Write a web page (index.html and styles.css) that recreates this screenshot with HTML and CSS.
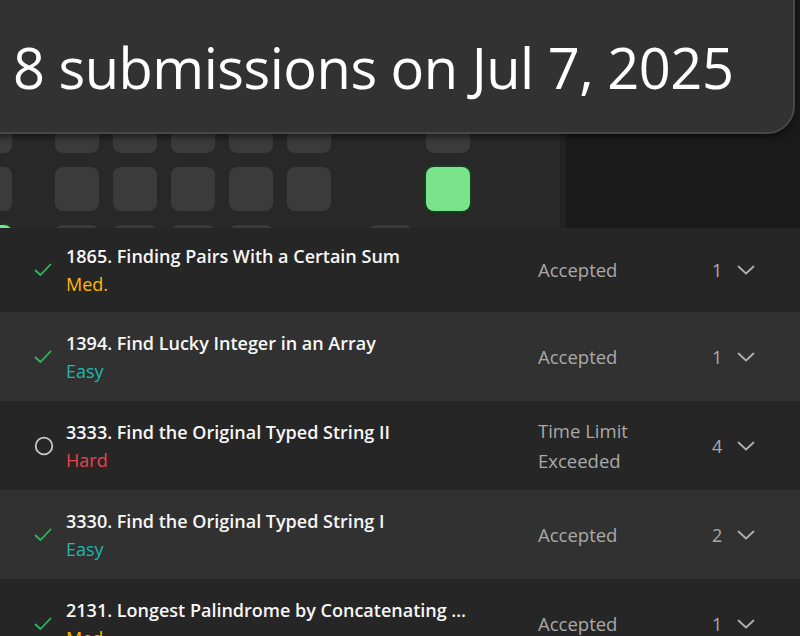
FILE: index.html
```html
<!DOCTYPE html>
<html lang="en">
<head>
<meta charset="utf-8">
<title>Submissions</title>
<link rel="stylesheet" href="styles.css">
</head>
<body>
<div class="page">
  <section class="top">
    <div class="calendar">
      <div class="month">
        <div class="week"><span class="cell"></span><span class="cell"></span><span class="cell green"></span></div>
      </div>
      <div class="month">
        <div class="week"><span class="cell"></span><span class="cell"></span><span class="cell"></span></div>
        <div class="week"><span class="cell"></span><span class="cell"></span><span class="cell"></span></div>
        <div class="week"><span class="cell"></span><span class="cell"></span><span class="cell"></span></div>
        <div class="week"><span class="cell"></span><span class="cell"></span><span class="cell"></span></div>
        <div class="week"><span class="cell"></span><span class="cell"></span><span class="cell empty"></span></div>
      </div>
      <div class="month current">
        <div class="week"><span class="cell empty"></span><span class="cell empty"></span><span class="cell"></span></div>
        <div class="week"><span class="cell"></span><span class="cell green"></span><span class="cell empty"></span></div>
      </div>
    </div>
    <div class="side"></div>
    <div class="tooltip">8 submissions on Jul 7, 2025</div>
  </section>

  <section class="list">
    <div class="row dark first">
      <span class="icon"><svg width="18" height="14" viewBox="0 0 18 14"><path d="M1.5 7.5 L6.5 12 L16.5 1.5" fill="none" stroke="#2cbb5d" stroke-width="1.8" stroke-linecap="round" stroke-linejoin="round"/></svg></span>
      <div class="info">
        <div class="title">1865. Finding Pairs With a Certain Sum</div>
        <div class="diff med">Med.</div>
      </div>
      <div class="status">Accepted</div>
      <div class="count">1</div>
      <span class="chev"><svg width="18" height="10" viewBox="0 0 18 10"><path d="M1.5 1.5 L9 8.5 L16.5 1.5" fill="none" stroke="#b0b0b0" stroke-width="1.8" stroke-linecap="round" stroke-linejoin="round"/></svg></span>
    </div>
    <div class="row light">
      <span class="icon"><svg width="18" height="14" viewBox="0 0 18 14"><path d="M1.5 7.5 L6.5 12 L16.5 1.5" fill="none" stroke="#2cbb5d" stroke-width="1.8" stroke-linecap="round" stroke-linejoin="round"/></svg></span>
      <div class="info">
        <div class="title">1394. Find Lucky Integer in an Array</div>
        <div class="diff easy">Easy</div>
      </div>
      <div class="status">Accepted</div>
      <div class="count">1</div>
      <span class="chev"><svg width="18" height="10" viewBox="0 0 18 10"><path d="M1.5 1.5 L9 8.5 L16.5 1.5" fill="none" stroke="#b0b0b0" stroke-width="1.8" stroke-linecap="round" stroke-linejoin="round"/></svg></span>
    </div>
    <div class="row dark">
      <span class="icon"><svg width="20" height="20" viewBox="0 0 20 20"><circle cx="10" cy="10" r="8.3" fill="none" stroke="#c8c8c8" stroke-width="1.8"/></svg></span>
      <div class="info">
        <div class="title">3333. Find the Original Typed String II</div>
        <div class="diff hard">Hard</div>
      </div>
      <div class="status">Time Limit Exceeded</div>
      <div class="count">4</div>
      <span class="chev"><svg width="18" height="10" viewBox="0 0 18 10"><path d="M1.5 1.5 L9 8.5 L16.5 1.5" fill="none" stroke="#b0b0b0" stroke-width="1.8" stroke-linecap="round" stroke-linejoin="round"/></svg></span>
    </div>
    <div class="row light">
      <span class="icon"><svg width="18" height="14" viewBox="0 0 18 14"><path d="M1.5 7.5 L6.5 12 L16.5 1.5" fill="none" stroke="#2cbb5d" stroke-width="1.8" stroke-linecap="round" stroke-linejoin="round"/></svg></span>
      <div class="info">
        <div class="title">3330. Find the Original Typed String I</div>
        <div class="diff easy">Easy</div>
      </div>
      <div class="status">Accepted</div>
      <div class="count">2</div>
      <span class="chev"><svg width="18" height="10" viewBox="0 0 18 10"><path d="M1.5 1.5 L9 8.5 L16.5 1.5" fill="none" stroke="#b0b0b0" stroke-width="1.8" stroke-linecap="round" stroke-linejoin="round"/></svg></span>
    </div>
    <div class="row dark">
      <span class="icon"><svg width="18" height="14" viewBox="0 0 18 14"><path d="M1.5 7.5 L6.5 12 L16.5 1.5" fill="none" stroke="#2cbb5d" stroke-width="1.8" stroke-linecap="round" stroke-linejoin="round"/></svg></span>
      <div class="info">
        <div class="title">2131. Longest Palindrome by Concatenating …</div>
        <div class="diff med">Med.</div>
      </div>
      <div class="status">Accepted</div>
      <div class="count">1</div>
      <span class="chev"><svg width="18" height="10" viewBox="0 0 18 10"><path d="M1.5 1.5 L9 8.5 L16.5 1.5" fill="none" stroke="#b0b0b0" stroke-width="1.8" stroke-linecap="round" stroke-linejoin="round"/></svg></span>
    </div>
  </section>
</div>
</body>
</html>
```

FILE: styles.css
```css
html, body {
  margin: 0;
  padding: 0;
  background: #1a1a1a;
  font-family: "Open Sans", "Noto Sans", sans-serif;
  overflow: hidden;
}

.page {
  width: 800px;
  height: 636px;
  overflow: hidden;
}

.top {
  position: relative;
  display: flex;
  height: 228px;
}

.calendar {
  flex: 0 0 592px;
  height: 228px;
  background: #282828;
  display: flex;
  align-items: flex-start;
  gap: 43px;
  margin-left: -32px;
  padding-top: 109px;
  overflow: hidden;
  box-sizing: border-box;
}

.month {
  display: flex;
  gap: 14px;
  flex-shrink: 0;
}

.month.current {
  margin-left: -6px;
}

.week {
  display: flex;
  flex-direction: column;
  gap: 14px;
  flex-shrink: 0;
}

.cell {
  display: block;
  flex-shrink: 0;
  width: 44px;
  height: 44px;
  border-radius: 8px;
  background: #3b3b3b;
}

.cell.empty {
  visibility: hidden;
}

.cell.green {
  background: #7be38a;
  box-shadow: 0 0 0 2px #173d22;
}

.side {
  flex: 1;
  background: #1a1a1a;
  border-left: 6px solid #222;
}

.tooltip {
  position: absolute;
  left: -40px;
  top: -40px;
  width: 835px;
  height: 174px;
  box-sizing: border-box;
  padding: 40px 0 0 51px;
  display: flex;
  align-items: center;
  background: #323232;
  border: 2px solid #484848;
  border-radius: 28px;
  box-shadow: 0 3px 6px rgba(0, 0, 0, 0.5);
  color: #ffffff;
  font-size: 56px;
  font-weight: 400;
  letter-spacing: -0.5px;
  white-space: nowrap;
}

.list {
  display: flex;
  flex-direction: column;
}

.row {
  display: flex;
  align-items: center;
  height: 89px;
  box-sizing: border-box;
  padding-left: 34px;
}

.row.first {
  height: 84px;
}

.row.dark {
  background: #262626;
}

.row.light {
  background: #313131;
}

.icon {
  width: 32px;
  display: flex;
  align-items: center;
}

.info {
  width: 472px;
  display: flex;
  flex-direction: column;
}

.title {
  color: #f7f7f7;
  font-size: 18px;
  font-weight: 600;
  line-height: 28px;
  white-space: nowrap;
}

.diff {
  font-size: 18px;
  line-height: 28px;
}

.med { color: #ffb700; }
.easy { color: #1cb8ad; }
.hard { color: #f0404a; }

.status {
  width: 150px;
  padding-right: 24px;
  color: #a9a9a9;
  font-size: 18.5px;
  line-height: 30px;
}

.count {
  width: 25px;
  color: #a9a9a9;
  font-size: 18px;
  text-align: left;
}

.chev {
  display: flex;
  align-items: center;
}
```
